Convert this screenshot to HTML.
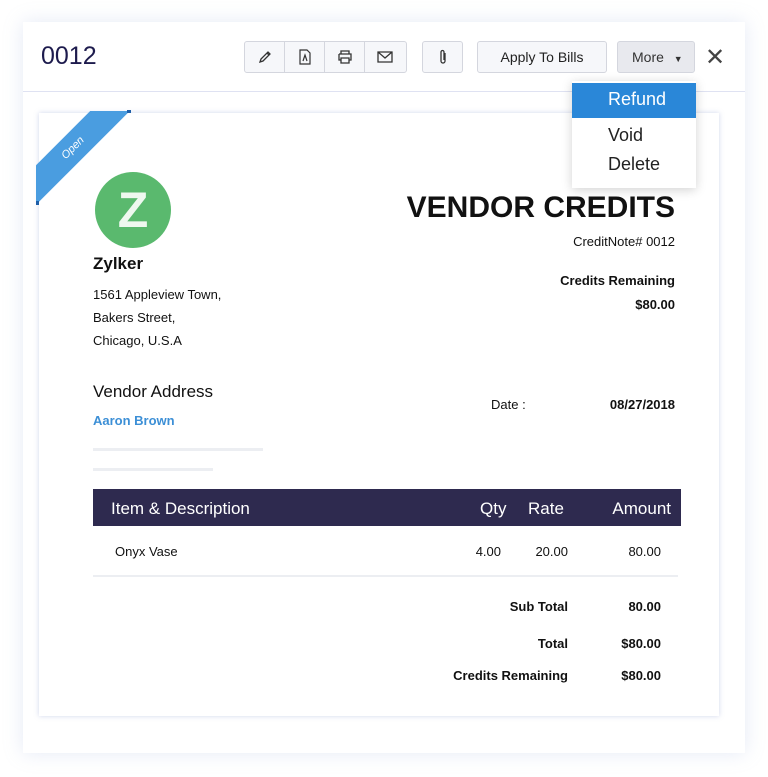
<!DOCTYPE html>
<html><head><meta charset="utf-8"><style>
*{margin:0;padding:0;box-sizing:border-box}
body{width:768px;height:777px;background:#fff;font-family:"Liberation Sans",sans-serif;position:relative;overflow:hidden;color:#111}
.a{position:absolute;white-space:nowrap}
.card{position:absolute;left:23px;top:22px;width:722px;height:731px;background:#fff;box-shadow:0 0 18px rgba(150,170,220,.25)}
.doc{position:absolute;left:39px;top:113px;width:680px;height:603px;background:#fff;box-shadow:0 0 5px rgba(120,140,200,.35)}
.btn{position:absolute;top:41px;height:32px;border:1px solid #d4d6de;border-radius:3px;background:#f6f7fa}
.ic{position:absolute;top:0;width:40px;height:30px;border-right:1px solid #d4d6de;display:flex;align-items:center;justify-content:center}
.r{text-align:right}
.b{font-weight:bold}
</style></head><body>
<div class="card"></div>
<div class="a" style="left:41px;top:42px;font-size:25px;color:#1d1b4d">0012</div>
<div class="btn" style="left:244px;width:163px">
 <div class="ic" style="left:0"><svg width="16" height="16" viewBox="0 0 16 16" fill="none" stroke="#333" stroke-width="1.3"><path d="M3 13l1-3 7-7 2 2-7 7z M10 4l2 2"/></svg></div>
 <div class="ic" style="left:40px"><svg width="14" height="16" viewBox="0 0 14 16" fill="none" stroke="#333" stroke-width="1.2"><path d="M2 1h7l3 3v11H2z M5 12l2-6 2 6"/></svg></div>
 <div class="ic" style="left:80px"><svg width="16" height="16" viewBox="0 0 16 16" fill="none" stroke="#333" stroke-width="1.3"><path d="M4 5V2h8v3 M2 5h12v6h-2 M4 11H2V5 M4 9h8v5H4z"/></svg></div>
 <div class="ic" style="left:120px;border-right:0"><svg width="16" height="14" viewBox="0 0 16 14" fill="none" stroke="#333" stroke-width="1.3"><path d="M1 2h14v10H1z M1 2l7 6 7-6"/></svg></div>
</div>
<div class="btn" style="left:422px;width:41px;display:flex;align-items:center;justify-content:center"><svg width="10" height="16" viewBox="0 0 10 16" fill="none" stroke="#333" stroke-width="1.3"><path d="M7 4v8a2 2 0 0 1-4 0V3a1.5 1.5 0 0 1 3 0v8"/></svg></div>
<div class="btn" style="left:477px;width:130px;font-size:14px;color:#222;text-align:center;line-height:30px">Apply To Bills</div>
<div class="btn" style="left:617px;width:78px;background:#e8e9ee;font-size:14px;color:#333;line-height:30px;padding-left:14px">More <span style="font-size:9px;margin-left:6px">▼</span></div>
<div class="a" style="left:705px;top:43px;font-size:24px;color:#444">✕</div>
<div class="a" style="left:23px;top:91px;width:722px;height:1px;background:#dfe2f2"></div>
<div class="doc"></div>
<div class="a" style="left:36px;top:111px;width:100px;height:100px;overflow:hidden">
 <div class="a" style="left:-63px;top:23px;width:200px;height:28px;background:#4a9de0;transform:rotate(-45deg);color:#fff;font-size:11px;font-style:italic;text-align:center;line-height:28px">Open</div>
</div>
<div class="a" style="left:127px;top:110px;width:4px;height:3px;background:#1f5fa8"></div>
<div class="a" style="left:36px;top:201px;width:3px;height:4px;background:#1f5fa8"></div>
<div class="a" style="left:572px;top:81px;width:124px;height:107px;background:#fff;box-shadow:0 2px 10px rgba(0,0,0,.18)"></div>
<div class="a" style="left:572px;top:83px;width:124px;height:35px;background:#2a87d8"></div>
<div class="a" style="left:608px;top:89px;font-size:18px;color:#fff">Refund</div>
<div class="a" style="left:608px;top:125px;font-size:18px;color:#222">Void</div>
<div class="a" style="left:608px;top:154px;font-size:18px;color:#222">Delete</div>
<div class="a" style="left:95px;top:172px;width:76px;height:76px;border-radius:50%;background:#5ab96e;color:#eef8ef;font-size:50px;font-weight:bold;text-align:center;line-height:76px">Z</div>
<div class="a b" style="left:93px;top:254px;font-size:17px">Zylker</div>
<div class="a" style="left:93px;top:283px;font-size:13px;line-height:23px">1561 Appleview Town,<br>Bakers Street,<br>Chicago, U.S.A</div>
<div class="a b r" style="right:93px;top:191px;font-size:30px">VENDOR CREDITS</div>
<div class="a r" style="right:93px;top:234px;font-size:13px">CreditNote# 0012</div>
<div class="a b r" style="right:93px;top:273px;font-size:13px">Credits Remaining</div>
<div class="a b r" style="right:93px;top:297px;font-size:13px">$80.00</div>
<div class="a" style="left:93px;top:382px;font-size:17px">Vendor Address</div>
<div class="a b" style="left:93px;top:413px;font-size:13px;color:#3c8fd6">Aaron Brown</div>
<div class="a" style="left:491px;top:397px;font-size:13px">Date :</div>
<div class="a b r" style="right:93px;top:397px;font-size:13px">08/27/2018</div>
<div class="a" style="left:93px;top:448px;width:170px;height:3px;background:#eceef2"></div>
<div class="a" style="left:93px;top:468px;width:120px;height:3px;background:#eceef2"></div>
<div class="a" style="left:93px;top:489px;width:588px;height:37px;background:#2e2a4f"></div>
<div class="a" style="left:111px;top:499px;font-size:17px;color:#fff">Item &amp; Description</div>
<div class="a" style="left:480px;top:499px;font-size:17px;color:#fff">Qty</div>
<div class="a" style="left:528px;top:499px;font-size:17px;color:#fff">Rate</div>
<div class="a r" style="right:97px;top:499px;font-size:17px;color:#fff">Amount</div>
<div class="a" style="left:115px;top:544px;font-size:13px">Onyx Vase</div>
<div class="a r" style="right:267px;top:544px;font-size:13px">4.00</div>
<div class="a r" style="right:200px;top:544px;font-size:13px">20.00</div>
<div class="a r" style="right:107px;top:544px;font-size:13px">80.00</div>
<div class="a" style="left:93px;top:575px;width:585px;height:2px;background:#eceef2"></div>
<div class="a b r" style="right:200px;top:599px;font-size:13px">Sub Total</div>
<div class="a b r" style="right:107px;top:599px;font-size:13px">80.00</div>
<div class="a b r" style="right:200px;top:636px;font-size:13px">Total</div>
<div class="a b r" style="right:107px;top:636px;font-size:13px">$80.00</div>
<div class="a b r" style="right:200px;top:668px;font-size:13px">Credits Remaining</div>
<div class="a b r" style="right:107px;top:668px;font-size:13px">$80.00</div>
</body></html>
